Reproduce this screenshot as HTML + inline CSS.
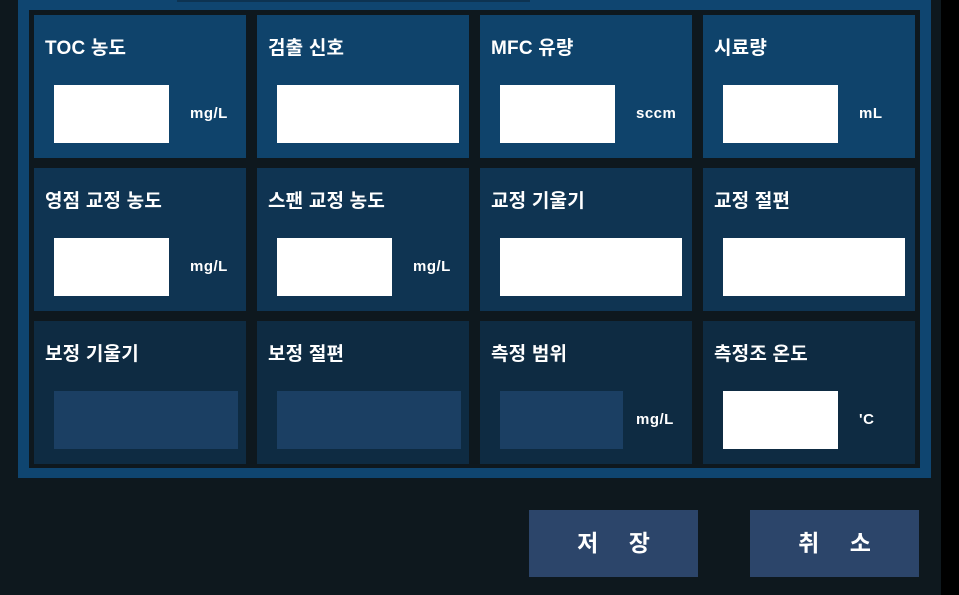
<!DOCTYPE html>
<html><head><meta charset="utf-8"><style>
*{margin:0;padding:0;box-sizing:border-box}
body{width:959px;height:595px;background:#0e181e;position:relative;overflow:hidden;font-family:"Liberation Sans","Noto Sans CJK KR",sans-serif;color:#fff}
.abs{position:absolute}
.frame{left:18px;top:0;width:913px;height:478px;background:#0f4570}
.inner{left:29px;top:10px;width:891px;height:458px;background:#0e181e}
.cell{position:absolute;width:212px;height:143px}
.r1{background:#0f436b}.r2{background:#0f3452}.r3{background:#0e2b42}
.lbl{position:absolute;left:11px;top:18px;font-size:19px;font-weight:bold;letter-spacing:0.2px}
.inp{position:absolute;left:20px;top:70px;width:115px;height:58px;background:#fff}
.wide{width:182px}
.dk{background:#1b3f63}
.unit{position:absolute;left:156px;top:90px;font-size:15px;font-weight:bold;letter-spacing:0.5px}
.btn{position:absolute;top:510px;width:169px;height:67px;background:#2c456a;font-size:23px;font-weight:bold;text-align:center;line-height:67px;word-spacing:24px}
</style></head><body>
<div class="abs" style="left:941px;top:0;width:18px;height:595px;background:#000"></div>
<div class="abs frame"></div>
<div class="abs" style="left:177px;top:0;width:353px;height:2px;background:#0d3352"></div>
<div class="abs inner"></div>

<div class="cell r1" style="left:34px;top:15px"><div class="lbl">TOC 농도</div><div class="inp"></div><div class="unit">mg/L</div></div>
<div class="cell r1" style="left:257px;top:15px"><div class="lbl">검출 신호</div><div class="inp wide"></div></div>
<div class="cell r1" style="left:480px;top:15px"><div class="lbl">MFC 유량</div><div class="inp"></div><div class="unit">sccm</div></div>
<div class="cell r1" style="left:703px;top:15px"><div class="lbl">시료량</div><div class="inp"></div><div class="unit">mL</div></div>

<div class="cell r2" style="left:34px;top:168px"><div class="lbl">영점 교정 농도</div><div class="inp"></div><div class="unit">mg/L</div></div>
<div class="cell r2" style="left:257px;top:168px"><div class="lbl">스팬 교정 농도</div><div class="inp"></div><div class="unit">mg/L</div></div>
<div class="cell r2" style="left:480px;top:168px"><div class="lbl">교정 기울기</div><div class="inp wide"></div></div>
<div class="cell r2" style="left:703px;top:168px"><div class="lbl">교정 절편</div><div class="inp wide"></div></div>

<div class="cell r3" style="left:34px;top:321px"><div class="lbl">보정 기울기</div><div class="inp wide dk" style="width:184px"></div></div>
<div class="cell r3" style="left:257px;top:321px"><div class="lbl">보정 절편</div><div class="inp wide dk" style="width:184px"></div></div>
<div class="cell r3" style="left:480px;top:321px"><div class="lbl">측정 범위</div><div class="inp dk" style="width:123px"></div><div class="unit">mg/L</div></div>
<div class="cell r3" style="left:703px;top:321px"><div class="lbl">측정조 온도</div><div class="inp"></div><div class="unit">'C</div></div>

<div class="btn" style="left:529px">저 장</div>
<div class="btn" style="left:750px">취 소</div>
</body></html>
